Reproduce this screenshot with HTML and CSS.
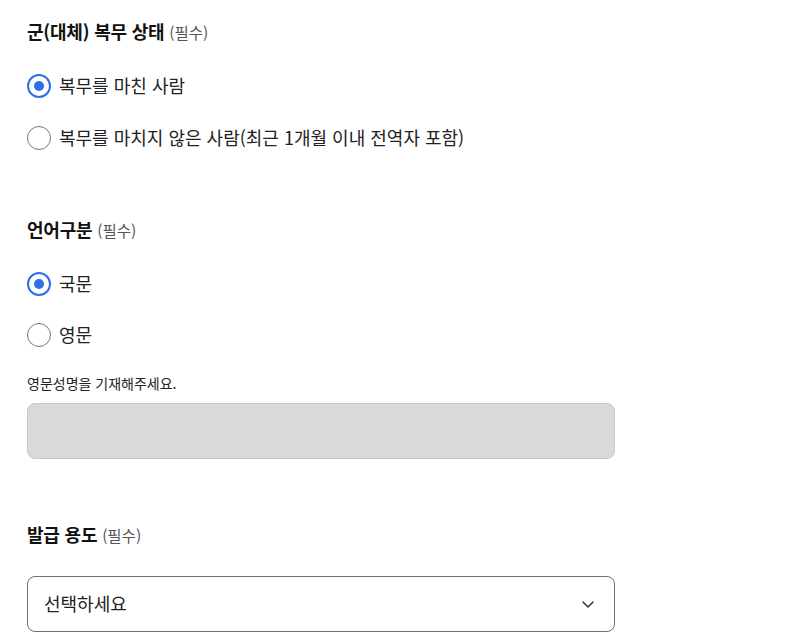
FILE: index.html
```html
<!DOCTYPE html>
<html lang="ko">
<head>
<meta charset="utf-8">
<title>신청서</title>
<link rel="stylesheet" href="styles.css">
</head>
<body>
<main class="page">
  <section class="field field-first">
    <h2 class="field-title">군(대체) 복무 상태 <span class="req">(필수)</span></h2>
    <div class="options">
      <div class="option"><span class="radio checked"></span><span class="label">복무를 마친 사람</span></div>
      <div class="option"><span class="radio"></span><span class="label">복무를 마치지 않은 사람(최근 1개월 이내 전역자 포함)</span></div>
    </div>
  </section>

  <section class="field field-lang">
    <h2 class="field-title">언어구분 <span class="req">(필수)</span></h2>
    <div class="options options-lang">
      <div class="option"><span class="radio checked"></span><span class="label">국문</span></div>
      <div class="option"><span class="radio"></span><span class="label">영문</span></div>
    </div>
    <p class="hint">영문성명을 기재해주세요.</p>
    <div class="text-input disabled"></div>
  </section>

  <section class="field field-purpose">
    <h2 class="field-title">발급 용도 <span class="req">(필수)</span></h2>
    <div class="select">
      <span class="select-text">선택하세요</span>
      <svg class="chevron" width="14" height="9" viewBox="0 0 14 9" aria-hidden="true"><path d="M2 2 L7 7 L12 2" fill="none" stroke="#333" stroke-width="1.5" stroke-linecap="round" stroke-linejoin="round"/></svg>
    </div>
  </section>
</main>
</body>
</html>
```

FILE: styles.css
```css
* { box-sizing: border-box; }
html, body { margin: 0; padding: 0; background: #fff; }
body {
  font-family: "Noto Sans CJK KR", "Noto Sans", sans-serif;
  color: #222;
}
.page {
  width: 615px;
  padding: 18px 0 0 27px;
  display: flex;
  flex-direction: column;
}
.field { display: flex; flex-direction: column; margin: 0; }
.field-first .options { margin-top: 30px; }
.field-lang { margin-top: 66px; }
.field-lang .options { margin-top: 30px; }
.field-purpose { margin-top: 62px; }
.field-title {
  margin: 0;
  font-size: 18px;
  font-weight: 700;
  line-height: 26px;
  height: 26px;
  color: #111;
  letter-spacing: -0.2px;
}
.req {
  font-size: 15.5px;
  font-weight: 400;
  color: #555;
  letter-spacing: 0;
}
.options {
  display: flex;
  flex-direction: column;
  gap: 28px;
}
.options-lang { gap: 27px; }
.option {
  display: flex;
  align-items: center;
  gap: 8px;
  height: 24px;
}
.radio {
  width: 24px;
  height: 24px;
  border-radius: 50%;
  border: 1px solid #767676;
  background: #fff;
  flex: none;
  display: flex;
  align-items: center;
  justify-content: center;
}
.radio.checked { border: 2px solid #2e6ee6; }
.radio.checked::after {
  content: "";
  width: 10px;
  height: 10px;
  border-radius: 50%;
  background: #2e6ee6;
}
.label {
  font-size: 18px;
  line-height: 22px;
  padding-bottom: 3px;
  color: #222;
}
.hint {
  margin: 26px 0 0;
  font-size: 14px;
  line-height: 20px;
  color: #222;
}
.text-input {
  margin-top: 10px;
  width: 588px;
  height: 56px;
  border-radius: 8px;
  border: 1px solid #c9c9c9;
  background: #d9d9d9;
}
.select {
  margin-top: 29px;
  width: 588px;
  height: 56px;
  border: 1px solid #6f6f6f;
  border-radius: 8px;
  display: flex;
  align-items: center;
  justify-content: space-between;
  padding: 0 19px 3px 16px;
}
.select-text {
  font-size: 18px;
  color: #222;
}
.chevron { display: block; margin-top: 3px; }
```
